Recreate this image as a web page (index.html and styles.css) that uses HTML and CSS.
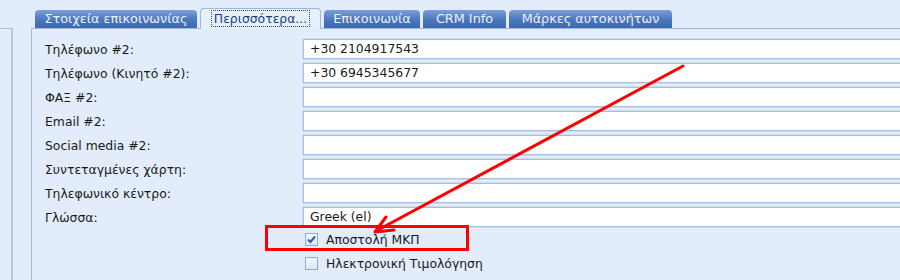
FILE: index.html
```html
<!DOCTYPE html>
<html lang="el">
<head>
    <meta charset="UTF-8">
    <title>Περισσότερα στοιχεία</title>
    <link rel="stylesheet" href="styles.css">
</head>
<body>
    <div class="page">
        <div class="side"></div>
        <div class="tab-panel">
            <div class="tab-strip">
                <div class="tab tab-details">Στοιχεία επικοινωνίας</div>
                <div class="tab tab-more active"><span class="focus">Περισσότερα...</span></div>
                <div class="tab tab-contact">Επικοινωνία</div>
                <div class="tab tab-crm">CRM Info</div>
                <div class="tab tab-brands">Μάρκες αυτοκινήτων</div>
            </div>
            <div class="tab-body">
                <div class="form">
                    <label>Τηλέφωνο #2:</label>
                    <div class="field">+30 2104917543</div>
                    <label>Τηλέφωνο (Κινητό #2):</label>
                    <div class="field">+30 6945345677</div>
                    <label>ΦΑΞ #2:</label>
                    <div class="field"></div>
                    <label>Email #2:</label>
                    <div class="field"></div>
                    <label>Social media #2:</label>
                    <div class="field"></div>
                    <label>Συντεταγμένες χάρτη:</label>
                    <div class="field"></div>
                    <label>Τηλεφωνικό κέντρο:</label>
                    <div class="field"></div>
                    <label>Γλώσσα:</label>
                    <div class="field">Greek (el)</div>
                </div>
                <div class="checks">
                    <div class="check">
                        <span class="box checked">
                            <svg width="11" height="11" viewBox="0 0 11 11"><path d="M2 5.5 L4.5 8 L9 2.5" fill="none" stroke="#2b5cb0" stroke-width="2"/></svg>
                        </span>
                        <span>Αποστολή ΜΚΠ</span>
                    </div>
                    <div class="check">
                        <span class="box"></span>
                        <span>Ηλεκτρονική Τιμολόγηση</span>
                    </div>
                </div>
            </div>
        </div>
    </div>

    <!-- red annotation drawn over the form -->
    <svg class="annotation" width="900" height="280" viewBox="0 0 900 280">
        <rect x="266.5" y="226.5" width="201" height="23" fill="none" stroke="#ff0000" stroke-width="3"/>
        <line x1="683" y1="66" x2="376" y2="231" stroke="#ff0000" stroke-width="3" stroke-linecap="round"/>
        <polyline points="394,230 375,232 386,217" fill="none" stroke="#ff0000" stroke-width="3" stroke-linecap="round" stroke-linejoin="round"/>
    </svg>
</body>
</html>
```

FILE: styles.css
```css
body {
    margin: 0;
    width: 900px;
    height: 280px;
    overflow: hidden;
    position: relative;
    background-color: #e2ecfb;
    font-family: 'DejaVu Sans', Verdana, sans-serif;
    font-size: 12.4px;
    color: #1a1a1a;
}
.page {
    display: flex;
    height: 280px;
}
.side {
    width: 11px;
    margin-top: 28px;
    border-top: 1px solid #a9c1e4;
    border-right: 2px solid #b3c9e8;
}
.tab-panel {
    flex: 1;
    min-width: 0;
    margin-left: 18px;
    display: flex;
    flex-direction: column;
}
.tab-strip {
    height: 28px;
    display: flex;
    align-items: flex-end;
    gap: 3px;
    padding-left: 4px;
    border-bottom: 1px solid #9db9e0;
}
.tab {
    box-sizing: border-box;
    height: 18px;
    line-height: 18px;
    text-align: center;
    border-radius: 4px 4px 0 0;
    background: linear-gradient(#7b9fd9, #4a76bd 55%, #3d69b2);
    color: #e9f0fd;
    white-space: nowrap;
    font-size: 12.8px;
}
.tab-details { width: 162px; }
.tab-more { width: 121px; }
.tab-contact { width: 96px; }
.tab-crm { width: 83px; }
.tab-brands { width: 163px; }
.tab.active {
    height: 21px;
    line-height: 19px;
    margin-bottom: -1px;
    background: #e6effc;
    border: 1px solid #9db9e0;
    border-bottom: none;
    color: #1d3f7a;
    font-size: 12.4px;
}
.focus {
    border: 1px dotted #2a4f8f;
    padding: 0 2px;
}
.tab-body {
    flex: 1;
    border-left: 1px solid #9fbbe2;
    padding: 10px 0 0 13px;
}
.form {
    display: grid;
    grid-template-columns: 258px 1fr;
    grid-auto-rows: 20px;
    row-gap: 4px;
}
.form label {
    align-self: center;
    white-space: nowrap;
}
.field {
    box-sizing: border-box;
    height: 20px;
    line-height: 18px;
    padding-left: 6px;
    background: #fff;
    border: 1px solid #a6bee2;
    border-right: none;
    box-shadow: 0 -1px 0 #cddcf1, 0 1px 0 #cddcf1, -1px 0 0 #cddcf1;
}
.checks {
    margin-left: 260px;
}
.check {
    height: 24px;
    display: flex;
    align-items: center;
    gap: 8px;
}
.box {
    width: 13px;
    height: 13px;
    box-sizing: border-box;
    border: 1px solid #91a9cf;
    background: linear-gradient(#f7f9fd, #dfe7f4);
    display: flex;
    align-items: center;
    justify-content: center;
}
.annotation {
    position: absolute;
    top: 0;
    left: 0;
    pointer-events: none;
}
```
